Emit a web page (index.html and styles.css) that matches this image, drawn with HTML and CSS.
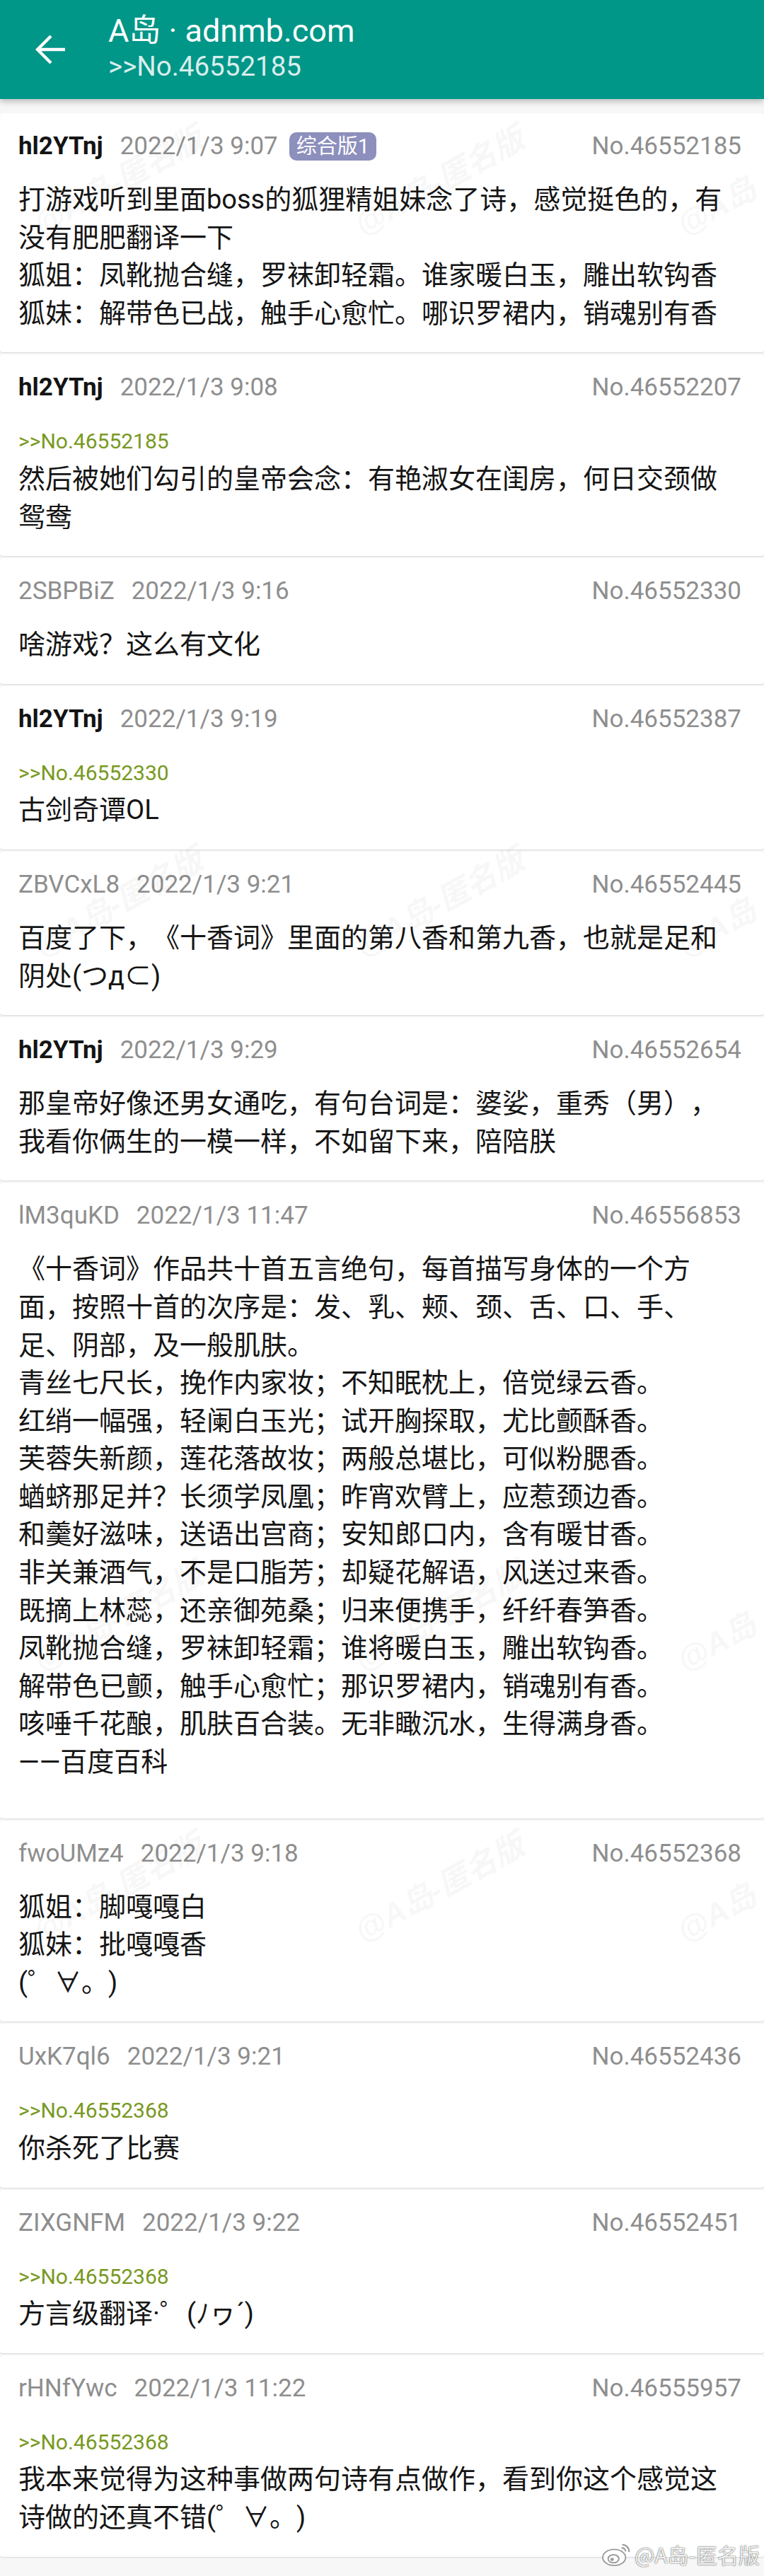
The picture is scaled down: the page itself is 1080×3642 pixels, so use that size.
FILE: index.html
```html
<!DOCTYPE html>
<html lang="zh-CN">
<head>
<meta charset="utf-8">
<title>A岛 · adnmb.com</title>
<link rel="stylesheet" href="styles.css">
</head>
<body>
<div class="page">
  <header class="appbar">
    <svg class="appbar-back" viewBox="0 0 44 44" aria-hidden="true">
      <path d="M3 22 H42 M22 3 L3 22 L22 41" fill="none" stroke="#fff" stroke-width="4.4" stroke-linecap="butt" stroke-linejoin="miter"/>
    </svg>
    <div class="appbar-titles">
      <div class="appbar-title">A岛 · adnmb.com</div>
      <div class="appbar-subtitle">&gt;&gt;No.46552185</div>
    </div>
  </header>

  <main class="thread">
    <article class="post">
      <div class="post-meta">
        <span class="post-uid post-uid--po">hl2YTnj</span>
        <span class="post-time">2022/1/3 9:07</span>
        <span class="post-tag">综合版1</span>
        <span class="post-no">No.46552185</span>
      </div>
      <div class="post-body">打游戏听到里面boss的狐狸精姐妹念了诗，感觉挺色的，有没有肥肥翻译一下<br>狐姐：凤靴抛合缝，罗袜卸轻霜。谁家暖白玉，雕出软钩香<br>狐妹：解带色已战，触手心愈忙。哪识罗裙内，销魂别有香</div>
    </article>

    <article class="post">
      <div class="post-meta">
        <span class="post-uid post-uid--po">hl2YTnj</span>
        <span class="post-time">2022/1/3 9:08</span>
        <span class="post-no">No.46552207</span>
      </div>
      <div class="post-body"><div class="post-quote">&gt;&gt;No.46552185</div>然后被她们勾引的皇帝会念：有艳淑女在闺房，何日交颈做鸳鸯</div>
    </article>

    <article class="post">
      <div class="post-meta">
        <span class="post-uid">2SBPBiZ</span>
        <span class="post-time">2022/1/3 9:16</span>
        <span class="post-no">No.46552330</span>
      </div>
      <div class="post-body">啥游戏？这么有文化</div>
    </article>

    <article class="post">
      <div class="post-meta">
        <span class="post-uid post-uid--po">hl2YTnj</span>
        <span class="post-time">2022/1/3 9:19</span>
        <span class="post-no">No.46552387</span>
      </div>
      <div class="post-body"><div class="post-quote">&gt;&gt;No.46552330</div>古剑奇谭OL</div>
    </article>

    <article class="post">
      <div class="post-meta">
        <span class="post-uid">ZBVCxL8</span>
        <span class="post-time">2022/1/3 9:21</span>
        <span class="post-no">No.46552445</span>
      </div>
      <div class="post-body">百度了下，《十香词》里面的第八香和第九香，也就是足和阴处(つд⊂)</div>
    </article>

    <article class="post">
      <div class="post-meta">
        <span class="post-uid post-uid--po">hl2YTnj</span>
        <span class="post-time">2022/1/3 9:29</span>
        <span class="post-no">No.46552654</span>
      </div>
      <div class="post-body">那皇帝好像还男女通吃，有句台词是：婆娑，重秀（男），我看你俩生的一模一样，不如留下来，陪陪朕</div>
    </article>

    <article class="post">
      <div class="post-meta">
        <span class="post-uid">lM3quKD</span>
        <span class="post-time">2022/1/3 11:47</span>
        <span class="post-no">No.46556853</span>
      </div>
      <div class="post-body post-body--trail">《十香词》作品共十首五言绝句，每首描写身体的一个方面，按照十首的次序是：发、乳、颊、颈、舌、口、手、足、阴部，及一般肌肤。<br>青丝七尺长，挽作内家妆；不知眠枕上，倍觉绿云香。<br>红绡一幅强，轻阑白玉光；试开胸探取，尤比颤酥香。<br>芙蓉失新颜，莲花落故妆；两般总堪比，可似粉腮香。<br>蝤蛴那足并？长须学凤凰；昨宵欢臂上，应惹颈边香。<br>和羹好滋味，送语出宫商；安知郎口内，含有暖甘香。<br>非关兼酒气，不是口脂芳；却疑花解语，风送过来香。<br>既摘上林蕊，还亲御苑桑；归来便携手，纤纤春笋香。<br>凤靴抛合缝，罗袜卸轻霜；谁将暖白玉，雕出软钩香。<br>解带色已颤，触手心愈忙；那识罗裙内，销魂别有香。<br>咳唾千花酿，肌肤百合装。无非瞰沉水，生得满身香。<br>——百度百科</div>
    </article>

    <article class="post">
      <div class="post-meta">
        <span class="post-uid">fwoUMz4</span>
        <span class="post-time">2022/1/3 9:18</span>
        <span class="post-no">No.46552368</span>
      </div>
      <div class="post-body">狐姐：脚嘎嘎白<br>狐妹：批嘎嘎香<br>(゜∀。)</div>
    </article>

    <article class="post">
      <div class="post-meta">
        <span class="post-uid">UxK7ql6</span>
        <span class="post-time">2022/1/3 9:21</span>
        <span class="post-no">No.46552436</span>
      </div>
      <div class="post-body"><div class="post-quote">&gt;&gt;No.46552368</div>你杀死了比赛</div>
    </article>

    <article class="post">
      <div class="post-meta">
        <span class="post-uid">ZIXGNFM</span>
        <span class="post-time">2022/1/3 9:22</span>
        <span class="post-no">No.46552451</span>
      </div>
      <div class="post-body"><div class="post-quote">&gt;&gt;No.46552368</div>方言级翻译·゜(ﾉヮ´)</div>
    </article>

    <article class="post">
      <div class="post-meta">
        <span class="post-uid">rHNfYwc</span>
        <span class="post-time">2022/1/3 11:22</span>
        <span class="post-no">No.46555957</span>
      </div>
      <div class="post-body"><div class="post-quote">&gt;&gt;No.46552368</div>我本来觉得为这种事做两句诗有点做作，看到你这个感觉这诗做的还真不错(゜∀。)</div>
    </article>
  </main>

  <div class="watermarks" aria-hidden="true">
    <span class="wm wm-r1 wm-c1">@A岛-匿名版</span>
    <span class="wm wm-r1 wm-c2">@A岛-匿名版</span>
    <span class="wm wm-r1 wm-c3">@A岛</span>
    <span class="wm wm-r2 wm-c1">@A岛-匿名版</span>
    <span class="wm wm-r2 wm-c2">@A岛-匿名版</span>
    <span class="wm wm-r2 wm-c3">@A岛</span>
    <span class="wm wm-r3 wm-c1">@A岛-匿名版</span>
    <span class="wm wm-r3 wm-c2">@A岛-匿名版</span>
    <span class="wm wm-r3 wm-c3">@A岛</span>
    <span class="wm wm-r4 wm-c1">@A岛-匿名版</span>
    <span class="wm wm-r4 wm-c2">@A岛-匿名版</span>
    <span class="wm wm-r4 wm-c3">@A岛</span>
  </div>

  <div class="weibo-mark" aria-hidden="true">
    <svg class="weibo-logo" viewBox="0 0 48 40">
      <ellipse cx="20" cy="25" rx="17" ry="12" fill="rgba(255,255,255,0.85)" stroke="#9a9a9a" stroke-width="2"/>
      <ellipse cx="19" cy="27" rx="8" ry="6" fill="none" stroke="#9a9a9a" stroke-width="2"/>
      <circle cx="17" cy="28" r="2.5" fill="#9a9a9a"/>
      <path d="M32 6 A10 10 0 0 1 42 17" fill="none" stroke="#9a9a9a" stroke-width="2.2"/>
      <path d="M31 11 A5 5 0 0 1 37 16" fill="none" stroke="#9a9a9a" stroke-width="2.2"/>
    </svg>
    <span class="weibo-text">@A岛-匿名版</span>
  </div>
</div>
</body>
</html>
```

FILE: styles.css
```css
* {
  box-sizing: border-box;
}

html,
body {
  margin: 0;
  padding: 0;
}

body {
  width: 1080px;
  background: #f7f7f7;
  font-family: Roboto, "Noto Sans CJK SC", sans-serif;
  color: #151515;
  text-spacing-trim: space-all;
}

.page {
  position: relative;
  min-height: 3642px;
  overflow: hidden;
}

/* ---------- app bar ---------- */
.appbar {
  position: relative;
  z-index: 2;
  height: 140px;
  display: flex;
  align-items: flex-start;
  background: #009688;
  color: #fff;
  box-shadow: 0 3px 9px rgba(0, 0, 0, 0.28);
}

.appbar-back {
  flex: none;
  width: 44px;
  height: 44px;
  margin: 48px 0 0 50px;
}

.appbar-titles {
  margin-left: 59px;
  padding-top: 17px;
}

.appbar-title {
  font-size: 45px;
  line-height: 54px;
  white-space: nowrap;
}

.appbar-subtitle {
  font-size: 38.5px;
  line-height: 46px;
  color: rgba(255, 255, 255, 0.86);
  white-space: nowrap;
}

/* ---------- thread ---------- */
.thread {
  display: flex;
  flex-direction: column;
  gap: 3px;
  padding: 20px 0 17px;
}

.post {
  background: #fff;
  border-radius: 4px;
  box-shadow: 0 1px 2px rgba(0, 0, 0, 0.13);
  padding: 24px 32px 28px 26px;
}

.post-meta {
  display: flex;
  align-items: center;
  height: 46px;
  font-size: 35px;
  line-height: 46px;
  color: #8e8e8e;
  white-space: nowrap;
}

.post-uid {
  margin-right: 24px;
}

.post-uid--po {
  font-weight: 700;
  color: #141414;
}

.post-tag {
  display: inline-flex;
  align-items: center;
  height: 40px;
  margin-left: 16px;
  padding: 0 10px;
  border-radius: 10px;
  background: #8d8fbd;
  color: #fff;
  font-size: 29px;
  line-height: 40px;
}

.post-no {
  margin-left: auto;
}

.post-body {
  margin-top: 26px;
  font-size: 38px;
  line-height: 53.6px;
  color: #151515;
}

.post-body--trail {
  padding-bottom: 24px;
}

.post-quote {
  font-size: 30px;
  color: #789922;
}

/* ---------- watermarks (overlay) ---------- */
.watermarks {
  position: absolute;
  inset: 0;
  z-index: 3;
  pointer-events: none;
}

.wm {
  position: absolute;
  font-family: "Liberation Sans", "Noto Sans CJK SC", sans-serif;
  font-style: italic;
  font-weight: 700;
  font-size: 44px;
  line-height: 44px;
  color: rgba(0, 0, 0, 0.05);
  white-space: nowrap;
  transform: rotate(-29deg);
  transform-origin: 0 100%;
}

.wm-r1 { top: 296px; }
.wm-r2 { top: 1316px; }
.wm-r3 { top: 2326px; }
.wm-r4 { top: 2709px; }

.wm-c1 { left: 62px; }
.wm-c2 { left: 516px; }
.wm-c3 { left: 972px; }

.weibo-mark {
  position: absolute;
  z-index: 4;
  top: 3592px;
  right: 6px;
  display: flex;
  align-items: center;
  gap: 2px;
}

.weibo-logo {
  width: 46px;
  height: 38px;
}

.weibo-text {
  font-family: "Noto Sans CJK SC", sans-serif;
  font-size: 30px;
  line-height: 36px;
  color: rgba(255, 255, 255, 0.92);
  text-shadow: 0 0 2px rgba(0, 0, 0, 0.55), 0 0 1px rgba(0, 0, 0, 0.5);
}
```
